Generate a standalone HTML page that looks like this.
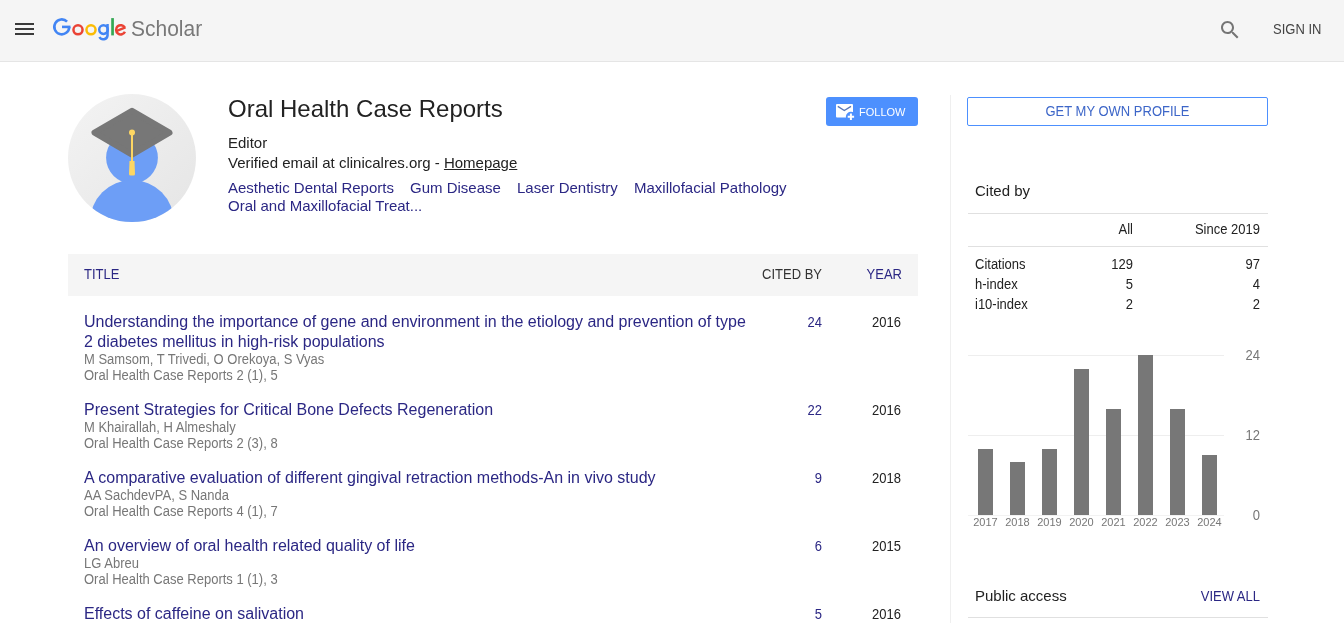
<!DOCTYPE html>
<html><head><meta charset="utf-8">
<style>
html,body{margin:0;padding:0;}
body{width:1344px;height:623px;overflow:hidden;position:relative;background:#fff;font-family:"Liberation Sans",sans-serif;color:#222;}
.a{position:absolute;white-space:nowrap;will-change:transform;}
#hdr{position:absolute;left:0;top:0;width:1344px;height:61px;background:#f5f5f5;border-bottom:1px solid #e5e5e5;}
.hb{position:absolute;left:15px;width:19px;height:2px;background:#3a3a3a;}
.lnk{color:#2b2784;}
.gray{color:#777;}
.t13{transform:scaleY(1.1);transform-origin:0 12.5px;}
</style></head>
<body>
<div id="hdr">
  <div class="hb" style="top:23px"></div>
  <div class="hb" style="top:28px"></div>
  <div class="hb" style="top:33px"></div>
  <svg class="a" style="left:0;top:0" width="210" height="61" viewBox="0 0 210 61">
    <g fill="none" stroke-width="2.6">
      <path d="M69.2 26.9 A7.45 7.45 0 1 1 67.07 21.63" stroke="#4285f4"/>
      <path d="M62 26.9 H70.5" stroke="#4285f4"/>
      <circle cx="78" cy="29.8" r="4.55" stroke="#ea4335" stroke-width="2.5"/>
      <circle cx="91" cy="29.8" r="4.55" stroke="#fbbc05" stroke-width="2.5"/>
      <circle cx="103.5" cy="29.6" r="4.3" stroke="#4285f4" stroke-width="2.5"/>
      <path d="M107.55 24 V35.5 A4.3 4.3 0 0 1 99.46 36.97" stroke="#4285f4" stroke-width="2.5"/>
      <path d="M112.55 18.1 V35.4" stroke="#34a853" stroke-width="2.7"/>
      <g transform="translate(120.7 29.8) rotate(-22)">
        <path d="M-4.6 -0.5 H5.4" stroke="#ea4335" stroke-width="2.3"/>
        <path d="M4.57 -0.5 A4.6 4.6 0 1 0 3.2 3.3" stroke="#ea4335" stroke-width="2.5"/>
      </g>
    </g>
  </svg>
  <div class="a" style="left:131px;top:13px;font-size:21px;line-height:30px;color:#787878;transform:scaleY(1.07);transform-origin:0 8px;">Scholar</div>
  <svg class="a" style="left:1218px;top:18px" width="24" height="24" viewBox="0 0 24 24"><path fill="#757575" d="M15.5 14h-.79l-.28-.27C15.41 12.59 16 11.11 16 9.5 16 5.91 13.09 3 9.5 3S3 5.91 3 9.5 5.91 16 9.5 16c1.61 0 3.09-.59 4.23-1.57l.27.28v.79l5 4.99L20.49 19l-4.99-5zm-6 0C7.01 14 5 11.99 5 9.5S7.01 5 9.5 5 14 7.01 14 9.5 11.99 14 9.5 14z"/></svg>
  <div class="t13 a" style="left:1273px;top:22px;font-size:13px;line-height:16px;color:#444;">SIGN IN</div>
</div>

<!-- avatar -->
<svg class="a" style="left:68px;top:94px" width="128" height="128" viewBox="0 0 128 128">
  <defs>
    <clipPath id="cc"><circle cx="64" cy="64" r="64"/></clipPath>
    <linearGradient id="bg" x1="0" y1="0" x2="1" y2="1"><stop offset="0" stop-color="#f3f3f3"/><stop offset="1" stop-color="#e5e5e5"/></linearGradient>
  </defs>
  <circle cx="64" cy="64" r="64" fill="url(#bg)"/>
  <g clip-path="url(#cc)">
    <circle cx="64" cy="63.7" r="25.9" fill="#6d9ef6"/>
    <circle cx="64" cy="128" r="42" fill="#6d9ef6"/>
  </g>
  <polygon points="64,16.9 26.5,38.7 64,60.6 101.5,38.7" fill="#777" stroke="#777" stroke-width="6" stroke-linejoin="round"/>
  <line x1="64" y1="38.4" x2="64" y2="68" stroke="#fdd663" stroke-width="2"/>
  <circle cx="64" cy="38.4" r="3" fill="#fdd663"/>
  <path d="M61.5 67 H66.5 L67 80 Q67 81.5 65.5 81.5 H62.5 Q61 81.5 61 80 Z" fill="#fdd663"/>
</svg>

<div class="a" style="left:228px;top:95px;font-size:24px;line-height:28px;">Oral Health Case Reports</div>
<div class="a" style="left:228px;top:134px;font-size:15px;line-height:18px;">Editor</div>
<div class="a" style="left:228px;top:154px;font-size:15px;line-height:18px;">Verified email at clinicalres.org - <span style="text-decoration:underline">Homepage</span></div>
<div class="a lnk" style="left:228px;top:179px;font-size:15px;line-height:18px;">Aesthetic Dental Reports</div>
<div class="a lnk" style="left:410px;top:179px;font-size:15px;line-height:18px;">Gum Disease</div>
<div class="a lnk" style="left:517px;top:179px;font-size:15px;line-height:18px;">Laser Dentistry</div>
<div class="a lnk" style="left:634px;top:179px;font-size:15px;line-height:18px;">Maxillofacial Pathology</div>
<div class="a lnk" style="left:228px;top:197px;font-size:15px;line-height:18px;">Oral and Maxillofacial Treat...</div>


<!-- follow button -->
<div class="a" style="left:826px;top:97px;width:92px;height:29px;background:#4d90fe;border-radius:3px;"></div>
<svg class="a" style="left:826px;top:96px" width="34" height="32" viewBox="0 0 34 32">
  <defs><mask id="em"><rect x="0" y="0" width="34" height="32" fill="#fff"/><circle cx="24.9" cy="20.8" r="5" fill="#000"/></mask></defs>
  <rect x="10" y="8" width="17" height="13.6" rx="1" fill="#fff" mask="url(#em)"/>
  <polyline points="11.8,10.4 18.3,14.6 25,10.4" fill="none" stroke="#5877b8" stroke-width="1.3"/>
  <path d="M21.7 20.8 H28.1 M24.9 17.6 V24" stroke="#fff" stroke-width="2"/>
</svg>
<div class="a" style="left:859px;top:104px;font-size:11px;line-height:16px;color:#fff;">FOLLOW</div>

<!-- table header -->
<div class="a" style="left:68px;top:254px;width:850px;height:42px;background:#f5f5f5;"></div>
<div class="t13 a lnk" style="left:84px;top:267px;font-size:13px;line-height:16px;">TITLE</div>
<div class="t13 a" style="left:722px;top:267px;width:100px;text-align:right;font-size:13px;line-height:16px;color:#333;">CITED BY</div>
<div class="t13 a lnk" style="left:802px;top:267px;width:100px;text-align:right;font-size:13px;line-height:16px;">YEAR</div>
<div class="a" style="left:84px;top:312px;font-size:16px;line-height:20px;"><div class="lnk">Understanding the importance of gene and environment in the etiology and prevention of type<br>2 diabetes mellitus in high-risk populations</div><div class="t13 gray" style="font-size:13px;line-height:16px;">M Samsom, T Trivedi, O Orekoya, S Vyas</div><div class="t13 gray" style="font-size:13px;line-height:16px;">Oral Health Case Reports 2 (1), 5</div></div>
<div class="t13 a lnk" style="left:722px;top:315px;width:100px;text-align:right;font-size:13px;line-height:16px;">24</div>
<div class="a t13" style="left:801px;top:315px;width:100px;text-align:right;font-size:13px;line-height:16px;color:#222;">2016</div>
<div class="a" style="left:84px;top:400px;font-size:16px;line-height:20px;"><div class="lnk">Present Strategies for Critical Bone Defects Regeneration</div><div class="t13 gray" style="font-size:13px;line-height:16px;">M Khairallah, H Almeshaly</div><div class="t13 gray" style="font-size:13px;line-height:16px;">Oral Health Case Reports 2 (3), 8</div></div>
<div class="t13 a lnk" style="left:722px;top:403px;width:100px;text-align:right;font-size:13px;line-height:16px;">22</div>
<div class="a t13" style="left:801px;top:403px;width:100px;text-align:right;font-size:13px;line-height:16px;color:#222;">2016</div>
<div class="a" style="left:84px;top:468px;font-size:16px;line-height:20px;"><div class="lnk">A comparative evaluation of different gingival retraction methods-An in vivo study</div><div class="t13 gray" style="font-size:13px;line-height:16px;">AA SachdevPA, S Nanda</div><div class="t13 gray" style="font-size:13px;line-height:16px;">Oral Health Case Reports 4 (1), 7</div></div>
<div class="t13 a lnk" style="left:722px;top:471px;width:100px;text-align:right;font-size:13px;line-height:16px;">9</div>
<div class="a t13" style="left:801px;top:471px;width:100px;text-align:right;font-size:13px;line-height:16px;color:#222;">2018</div>
<div class="a" style="left:84px;top:536px;font-size:16px;line-height:20px;"><div class="lnk">An overview of oral health related quality of life</div><div class="t13 gray" style="font-size:13px;line-height:16px;">LG Abreu</div><div class="t13 gray" style="font-size:13px;line-height:16px;">Oral Health Case Reports 1 (1), 3</div></div>
<div class="t13 a lnk" style="left:722px;top:539px;width:100px;text-align:right;font-size:13px;line-height:16px;">6</div>
<div class="a t13" style="left:801px;top:539px;width:100px;text-align:right;font-size:13px;line-height:16px;color:#222;">2015</div>
<div class="a" style="left:84px;top:604px;font-size:16px;line-height:20px;"><div class="lnk">Effects of caffeine on salivation</div></div>
<div class="t13 a lnk" style="left:722px;top:607px;width:100px;text-align:right;font-size:13px;line-height:16px;">5</div>
<div class="a t13" style="left:801px;top:607px;width:100px;text-align:right;font-size:13px;line-height:16px;color:#222;">2016</div>

<!-- right column -->
<div class="a" style="left:950px;top:95px;width:1px;height:528px;background:#efefef;"></div>
<div class="a" style="left:967px;top:97px;width:299px;height:27px;border:1px solid #4d90fe;border-radius:2px;"></div><div class="a t13" style="left:967px;top:104px;width:301px;text-align:center;font-size:13px;line-height:16px;color:#3d66c8;">GET MY OWN PROFILE</div>
<div class="a" style="left:975px;top:182px;font-size:15px;line-height:18px;">Cited by</div>
<div class="a" style="left:968px;top:213px;width:300px;height:1px;background:#e0e0e0;"></div>
<div class="a" style="left:968px;top:246px;width:300px;height:1px;background:#e0e0e0;"></div>
<div class="t13 a" style="left:1033px;top:222px;width:100px;text-align:right;font-size:13px;line-height:16px;">All</div>
<div class="t13 a" style="left:1160px;top:222px;width:100px;text-align:right;font-size:13px;line-height:16px;">Since 2019</div>
<div class="t13 a" style="left:975px;top:257px;font-size:13px;line-height:16px;">Citations</div><div class="t13 a" style="left:1033px;top:257px;width:100px;text-align:right;font-size:13px;line-height:16px;">129</div><div class="t13 a" style="left:1160px;top:257px;width:100px;text-align:right;font-size:13px;line-height:16px;">97</div>
<div class="t13 a" style="left:975px;top:277px;font-size:13px;line-height:16px;">h-index</div><div class="t13 a" style="left:1033px;top:277px;width:100px;text-align:right;font-size:13px;line-height:16px;">5</div><div class="t13 a" style="left:1160px;top:277px;width:100px;text-align:right;font-size:13px;line-height:16px;">4</div>
<div class="t13 a" style="left:975px;top:297px;font-size:13px;line-height:16px;">i10-index</div><div class="t13 a" style="left:1033px;top:297px;width:100px;text-align:right;font-size:13px;line-height:16px;">2</div><div class="t13 a" style="left:1160px;top:297px;width:100px;text-align:right;font-size:13px;line-height:16px;">2</div>
<div class="a" style="left:968px;top:355px;width:256px;height:1px;background:#eee;"></div>
<div class="a" style="left:968px;top:435px;width:256px;height:1px;background:#eee;"></div>
<div class="a" style="left:968px;top:515px;width:256px;height:1px;background:#f2f2f2;"></div>
<div class="a" style="left:978px;top:449px;width:15px;height:66px;background:#777;"></div><div class="a" style="left:970px;top:515px;width:31px;text-align:center;font-size:11px;line-height:14px;color:#777;">2017</div>
<div class="a" style="left:1010px;top:462px;width:15px;height:53px;background:#777;"></div><div class="a" style="left:1002px;top:515px;width:31px;text-align:center;font-size:11px;line-height:14px;color:#777;">2018</div>
<div class="a" style="left:1042px;top:449px;width:15px;height:66px;background:#777;"></div><div class="a" style="left:1034px;top:515px;width:31px;text-align:center;font-size:11px;line-height:14px;color:#777;">2019</div>
<div class="a" style="left:1074px;top:369px;width:15px;height:146px;background:#777;"></div><div class="a" style="left:1066px;top:515px;width:31px;text-align:center;font-size:11px;line-height:14px;color:#777;">2020</div>
<div class="a" style="left:1106px;top:409px;width:15px;height:106px;background:#777;"></div><div class="a" style="left:1098px;top:515px;width:31px;text-align:center;font-size:11px;line-height:14px;color:#777;">2021</div>
<div class="a" style="left:1138px;top:355px;width:15px;height:160px;background:#777;"></div><div class="a" style="left:1130px;top:515px;width:31px;text-align:center;font-size:11px;line-height:14px;color:#777;">2022</div>
<div class="a" style="left:1170px;top:409px;width:15px;height:106px;background:#777;"></div><div class="a" style="left:1162px;top:515px;width:31px;text-align:center;font-size:11px;line-height:14px;color:#777;">2023</div>
<div class="a" style="left:1202px;top:455px;width:15px;height:60px;background:#777;"></div><div class="a" style="left:1194px;top:515px;width:31px;text-align:center;font-size:11px;line-height:14px;color:#777;">2024</div>
<div class="t13 a" style="left:1200px;top:348px;width:60px;text-align:right;font-size:13px;line-height:16px;color:#777;">24</div>
<div class="t13 a" style="left:1200px;top:428px;width:60px;text-align:right;font-size:13px;line-height:16px;color:#777;">12</div>
<div class="t13 a" style="left:1200px;top:508px;width:60px;text-align:right;font-size:13px;line-height:16px;color:#777;">0</div>

<div class="a" style="left:975px;top:587px;font-size:15px;line-height:18px;">Public access</div>
<div class="t13 a lnk" style="left:1160px;top:589px;width:100px;text-align:right;font-size:13px;line-height:16px;">VIEW ALL</div>
<div class="a" style="left:968px;top:617px;width:300px;height:1px;background:#e0e0e0;"></div>
</body></html>
